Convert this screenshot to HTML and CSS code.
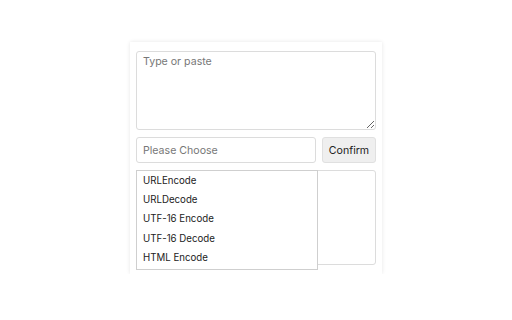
FILE: index.html
```html
<!DOCTYPE html>
<html lang="en">
<head>
  <meta charset="UTF-8">
  <title>Encode / Decode</title>
  <link rel="stylesheet" href="styles.css">
</head>
<body>
  <div class="card">
    <textarea class="entrada" placeholder="Type or paste"></textarea>
    <div class="linha">
      <div class="seletor">
        <input class="escolha" type="text" placeholder="Please Choose" readonly>
        <ul class="opcoes">
          <li>URLEncode</li>
          <li>URLDecode</li>
          <li>UTF-16 Encode</li>
          <li>UTF-16 Decode</li>
          <li>HTML Encode</li>
        </ul>
      </div>
      <button class="confirmar">Confirm</button>
    </div>
    <div class="saida"></div>
  </div>
</body>
</html>
```

FILE: styles.css
```css
body {
  margin: 0;
  font-family: Inter, "Noto Sans", sans-serif;
  background: #fff;
}
.card {
  width: 240px;
  margin: 42px auto 0;
  padding: 9px 6px 9px 6px;
  background: white;
  box-shadow: 0 0 4px rgba(0,0,0,0.1);
  display: flex;
  flex-direction: column;
  gap: 7px;
}
.entrada {
  box-sizing: border-box;
  width: 100%;
  height: 79px;
  margin: 0;
  padding: 3px 6px;
  border: 1px solid #dcdcdc;
  border-radius: 3px;
  font-family: inherit;
  font-size: 10.6px;
  resize: vertical;
  outline: none;
}
.entrada::placeholder,
.escolha::placeholder {
  color: #777;
}
.linha {
  display: flex;
  gap: 6px;
  height: 26px;
}
.seletor {
  position: relative;
  flex: 1;
}
.escolha {
  box-sizing: border-box;
  width: 100%;
  height: 26px;
  margin: 0;
  padding: 0 6px;
  border: 1px solid #dcdcdc;
  border-radius: 3px;
  font-family: inherit;
  font-size: 10.6px;
  outline: none;
}
.opcoes {
  position: absolute;
  top: 33px;
  left: 0;
  width: 182px;
  box-sizing: border-box;
  margin: 0;
  padding: 0 0 2px;
  list-style: none;
  background: white;
  border: 1px solid #cfcfcf;
  z-index: 2;
}
.opcoes li {
  height: 19.2px;
  line-height: 19px;
  padding: 0 6px;
  font-size: 9.7px;
  color: #222;
}
.confirmar {
  width: 54px;
  height: 26px;
  padding: 0;
  border: 1px solid #e0e0e0;
  border-radius: 3px;
  background: #efefef;
  font-family: inherit;
  font-size: 10.6px;
  color: #222;
}
.saida {
  height: 93px;
  border: 1px solid #dcdcdc;
  border-radius: 3px;
}
```
